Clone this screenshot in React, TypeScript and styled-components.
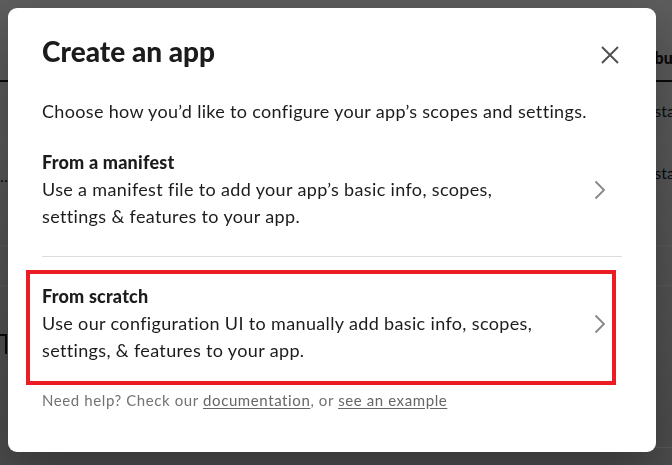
import React from "react"
import styled, { createGlobalStyle } from "styled-components"

//#region Css
const GlobalStyle = createGlobalStyle`
    html, body {
        margin: 0;
        height: 100%;
        overflow: hidden;
    }
    body {
        font-family: Lato, "Noto Sans", sans-serif;
        color: #1d1c1d;
    }
`

// the app list page that sits behind the dimmed overlay
const Page = styled.div`
    height: 100vh;
    background: linear-gradient(#ffffff, #d0d0d0);
    display: flex;
    flex-direction: column;
    padding-top: 40px;
    box-sizing: border-box;
`

interface RowProps {
    $height: number
    $line?: "strong" | "light" | "none"
}

const Row = styled.div<RowProps>`
    display: grid;
    grid-template-columns: 7px 1fr 57px;
    height: ${(p) => p.$height}px;
    box-sizing: border-box;
    border-bottom: ${(p) =>
        p.$line === "strong" ? "2px solid #1d1c1d" : p.$line === "light" ? "1px solid #f4f4f4" : "none"};
`

interface CellProps {
    $bold?: boolean
    $top?: number
    $indent?: number
    $line?: boolean
}

const Cell = styled.div<CellProps>`
    overflow: hidden;
    white-space: nowrap;
    font-size: 16px;
    font-weight: ${(p) => (p.$bold ? 900 : 400)};
    padding-top: ${(p) => p.$top ?? 0}px;
    padding-left: ${(p) => p.$indent ?? 0}px;
    box-sizing: border-box;
    border-bottom: ${(p) => (p.$line ? "1px solid #f4f4f4" : "none")};
`

const LeftCell = styled(Cell)`
    text-align: right;
`

const CornerMark = styled.div`
    margin-top: 48px;
    width: 5px;
    height: 18px;
    border-top: 2px solid #1d1c1d;
    border-right: 2px solid #1d1c1d;
`

const Overlay = styled.div`
    position: fixed;
    inset: 0;
    background: rgba(0, 0, 0, 0.64);
    padding: 8px;
    display: flex;
    align-items: flex-start;
`

const Modal = styled.div`
    width: 648px;
    background: #fff;
    border-radius: 9px;
    padding: 26px 34px 41px;
    box-sizing: border-box;
    box-shadow: 0 18px 48px rgba(0, 0, 0, 0.3);
`

const Header = styled.div`
    display: flex;
    justify-content: space-between;
    align-items: flex-start;
`

const Title = styled.h1`
    margin: 0;
    font-size: 28px;
    line-height: 34px;
    font-weight: 900;
    color: #1d1c1d;
`

const CloseButton = styled.button`
    margin-top: 9px;
    width: 24px;
    height: 24px;
    padding: 0;
    border: none;
    background: none;
    display: flex;
    align-items: center;
    justify-content: center;
    cursor: pointer;
`

const Intro = styled.p`
    margin: 30px 0 0;
    font-size: 18px;
    line-height: 27px;
    letter-spacing: 0.33px;
`

interface OptionProps {
    $highlighted?: boolean
}

const Option = styled.div<OptionProps>`
    display: flex;
    align-items: center;
    justify-content: space-between;
    cursor: pointer;
    ${(p) =>
        p.$highlighted
            ? `
        margin: 13px 6px 0 -16px;
        border: 4px solid #ec1c24;
        padding: 9px 6px 17px 12px;
    `
            : `
        padding: 24px 16px 26px 0;
        border-bottom: 1px solid #dddddd;
    `}
`

const OptionText = styled.div`
    max-width: 505px;
    font-size: 18px;
    line-height: 27px;
    letter-spacing: 0.35px;
`

const OptionTitle = styled.div`
    font-weight: 900;
    letter-spacing: 0.2px;
`

const Chevron = styled.svg`
    flex-shrink: 0;
    display: block;
`

const Footer = styled.p`
    margin: 4px 0 0;
    font-size: 15px;
    line-height: 22px;
    letter-spacing: 0.6px;
    color: #737373;
`

const FooterLink = styled.a`
    color: #666666;
    text-decoration: underline;
    text-underline-offset: 2px;
`
//#endregion

const options = [
    {
        title: "From a manifest",
        text: "Use a manifest file to add your app’s basic info, scopes, settings & features to your app.",
    },
    {
        title: "From scratch",
        text: "Use our configuration UI to manually add basic info, scopes, settings, & features to your app.",
        highlighted: true,
    },
]

const ChevronIcon = () => (
    <Chevron width="12" height="20" viewBox="0 0 12 20" fill="none">
        <path d="M1.5 1.5 L10 10 L1.5 18.5" stroke="#868686" strokeWidth="1.8" />
    </Chevron>
)

const App = () => {
    return (
        <>
            <GlobalStyle />
            <Page>
                <Row $height={42} $line="strong">
                    <LeftCell />
                    <div />
                    <Cell $bold $top={8} $indent={0}>Distribution</Cell>
                </Row>
                <Row $height={62} $line="light">
                    <LeftCell />
                    <div />
                    <Cell $top={19} $indent={26}>Installed</Cell>
                </Row>
                <Row $height={102} $line="light">
                    <LeftCell $top={22}>…</LeftCell>
                    <div />
                    <Cell $top={19} $indent={26}>Installed</Cell>
                </Row>
                <Row $height={40} $line="light" />
                <Row $height={162}>
                    <LeftCell>
                        <CornerMark />
                    </LeftCell>
                    <div />
                    <Cell $line />
                </Row>
            </Page>
            <Overlay>
                <Modal>
                    <Header>
                        <Title>Create an app</Title>
                        <CloseButton aria-label="Close">
                            <svg width="18" height="18" viewBox="0 0 18 18">
                                <path d="M1 1 L17 17 M17 1 L1 17" stroke="#4f4f4f" strokeWidth="1.9" />
                            </svg>
                        </CloseButton>
                    </Header>
                    <Intro>Choose how you’d like to configure your app’s scopes and settings.</Intro>
                    {options.map((o) => (
                        <Option key={o.title} $highlighted={o.highlighted}>
                            <OptionText>
                                <OptionTitle>{o.title}</OptionTitle>
                                {o.text}
                            </OptionText>
                            <ChevronIcon />
                        </Option>
                    ))}
                    <Footer>
                        Need help? Check our <FooterLink href="#">documentation</FooterLink>, or{" "}
                        <FooterLink href="#">see an example</FooterLink>
                    </Footer>
                </Modal>
            </Overlay>
        </>
    )
}

export default App
